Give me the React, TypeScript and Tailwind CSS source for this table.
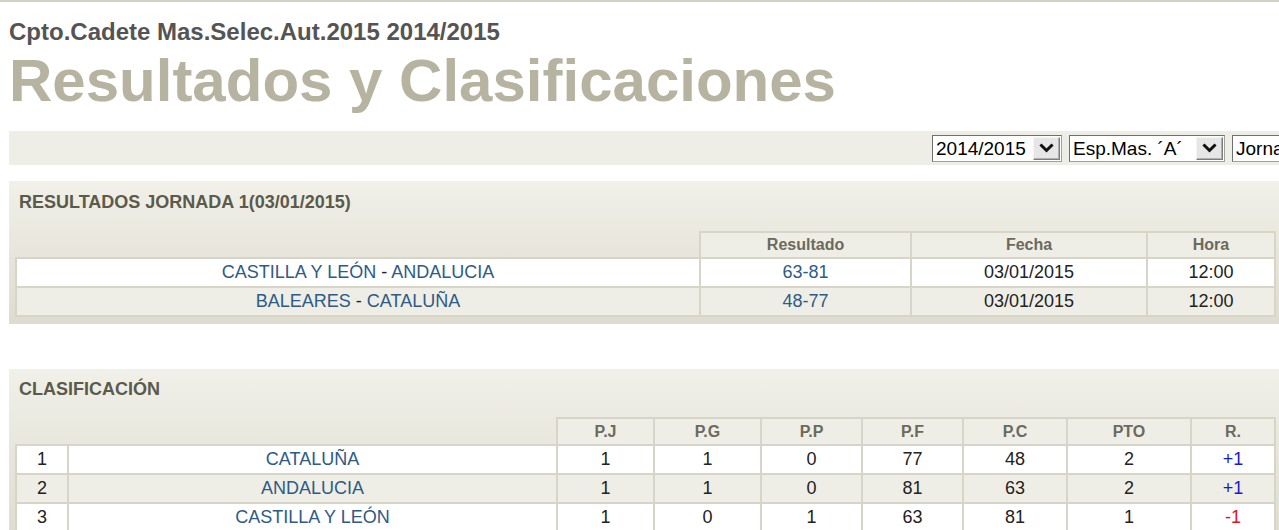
import React from "react";

const Chevron = () => (
  <svg width="15" height="13" viewBox="0 0 15 13" aria-hidden="true">
    <path d="M2.5 3.5 L7.5 8.5 L12.5 3.5" fill="none" stroke="#111" strokeWidth="3" strokeLinecap="square" />
  </svg>
);

function FakeSelect({ label, width }: { label: string; width: string }) {
  return (
    <div className={`${width} h-[27px] shrink-0 flex items-stretch bg-white border border-[#6f6f6f] border-r-[#a0a0a0] border-b-[#a0a0a0]`}>
      <div className="flex-1 pl-[3px] text-[19px] leading-[25px] text-black whitespace-nowrap overflow-hidden">{label}</div>
      <div className="w-[27px] m-[1px] flex items-center justify-center bg-[#e6e6e6] border border-[#7d7d7d] border-t-[#f4f4f4] border-l-[#f4f4f4] shadow-[inset_-1px_-1px_0_#b0b0b0]">
        <Chevron />
      </div>
    </div>
  );
}

const link = "text-[#2d5b86]";
const cell = "border-2 border-[#d7d5c7] text-center align-middle";
const th = "border-2 border-[#d7d5c7] text-center align-middle text-[16px] font-bold text-[#6b6a5d] bg-[#efeee6]";

const results = [
  { a: "CASTILLA Y LEÓN", b: "ANDALUCIA", r: "63-81", f: "03/01/2015", h: "12:00" },
  { a: "BALEARES", b: "CATALUÑA", r: "48-77", f: "03/01/2015", h: "12:00" },
];

const standings = [
  { n: 1, t: "CATALUÑA", pj: 1, pg: 1, pp: 0, pf: 77, pc: 48, pto: 2, r: "+1" },
  { n: 2, t: "ANDALUCIA", pj: 1, pg: 1, pp: 0, pf: 81, pc: 63, pto: 2, r: "+1" },
  { n: 3, t: "CASTILLA Y LEÓN", pj: 1, pg: 0, pp: 1, pf: 63, pc: 81, pto: 1, r: "-1" },
];

export default function App() {
  return (
    <div className="w-[1279px] h-[530px] overflow-hidden bg-white font-['Liberation_Sans',Arial,sans-serif]">
      <div className="h-[2px] bg-[#d3d2c4]" />
      <div className="pl-[9px]">
        <div className="pt-[16px] text-[24px] leading-[28px] font-bold text-[#545454] whitespace-nowrap">
          Cpto.Cadete Mas.Selec.Aut.2015 2014/2015
        </div>
        <h1 className="mt-[2px] text-[60px] leading-[66px] font-bold text-[#b6b3a0] whitespace-nowrap">
          Resultados y Clasificaciones
        </h1>

        <div className="mt-[17px] h-[34px] w-[1300px] bg-[#efeee6] flex items-center pl-[923px] gap-[7px]">
          <FakeSelect label="2014/2015" width="w-[130px]" />
          <FakeSelect label="Esp.Mas. ´A´" width="w-[156px]" />
          <FakeSelect label="Jornada 1" width="w-[140px]" />
        </div>

        <section className="mt-[16px] w-[1273px] pl-[6px] pr-[7px] pb-[7px] bg-gradient-to-b from-[#f1f0e9] to-[#dedccf]">
          <div className="pt-[10px] pb-[18px] pl-[4px] text-[18px] leading-[22px] font-bold text-[#5b5a4b]">
            RESULTADOS JORNADA 1(03/01/2015)
          </div>
          <table className="w-[1259px] table-fixed border-collapse text-[18px] text-[#222]">
            <colgroup>
              <col className="w-[684px]" />
              <col className="w-[211px]" />
              <col className="w-[236px]" />
              <col className="w-[128px]" />
            </colgroup>
            <thead>
              <tr className="h-[26px]">
                <th className="border-0" />
                <th className={th}>Resultado</th>
                <th className={th}>Fecha</th>
                <th className={th}>Hora</th>
              </tr>
            </thead>
            <tbody>
              {results.map((m, i) => (
                <tr key={i} className={`h-[28px] ${i % 2 === 0 ? "bg-white" : "bg-[#efeee6]"}`}>
                  <td className={cell}>
                    <span className={link}>{m.a}</span> - <span className={link}>{m.b}</span>
                  </td>
                  <td className={`${cell} ${link}`}>{m.r}</td>
                  <td className={cell}>{m.f}</td>
                  <td className={cell}>{m.h}</td>
                </tr>
              ))}
            </tbody>
          </table>
        </section>

        <section className="mt-[45px] w-[1273px] pl-[6px] pr-[7px] pb-[7px] bg-gradient-to-b from-[#f1f0e9] to-[#dedccf]">
          <div className="pt-[9px] pb-[17px] pl-[4px] text-[18px] leading-[22px] font-bold text-[#5b5a4b]">
            CLASIFICACIÓN
          </div>
          <table className="w-[1259px] table-fixed border-collapse text-[18px] text-[#222]">
            <colgroup>
              <col className="w-[52px]" />
              <col className="w-[489px]" />
              <col className="w-[97px]" />
              <col className="w-[107px]" />
              <col className="w-[101px]" />
              <col className="w-[101px]" />
              <col className="w-[104px]" />
              <col className="w-[124px]" />
              <col className="w-[84px]" />
            </colgroup>
            <thead>
              <tr className="h-[27px]">
                <th className="border-0" colSpan={2} />
                <th className={th}>P.J</th>
                <th className={th}>P.G</th>
                <th className={th}>P.P</th>
                <th className={th}>P.F</th>
                <th className={th}>P.C</th>
                <th className={th}>PTO</th>
                <th className={th}>R.</th>
              </tr>
            </thead>
            <tbody>
              {standings.map((s, i) => (
                <tr key={s.n} className={`h-[28px] ${i % 2 === 0 ? "bg-white" : "bg-[#efeee6]"}`}>
                  <td className={cell}>{s.n}</td>
                  <td className={`${cell} ${link}`}>{s.t}</td>
                  <td className={cell}>{s.pj}</td>
                  <td className={cell}>{s.pg}</td>
                  <td className={cell}>{s.pp}</td>
                  <td className={cell}>{s.pf}</td>
                  <td className={cell}>{s.pc}</td>
                  <td className={cell}>{s.pto}</td>
                  <td className={`${cell} ${s.r.startsWith("+") ? "text-[#1a1acc]" : "text-[#e0141e]"}`}>{s.r}</td>
                </tr>
              ))}
            </tbody>
          </table>
        </section>
      </div>
    </div>
  );
}
